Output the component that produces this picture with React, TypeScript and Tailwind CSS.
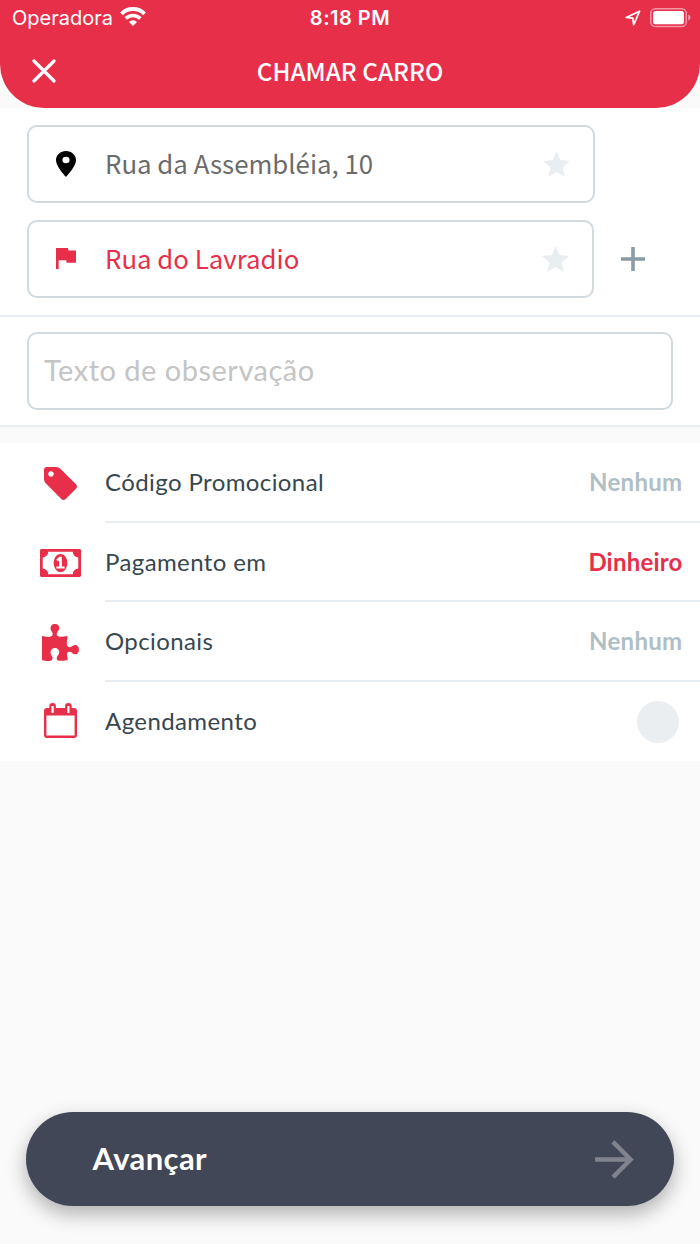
import React, { useState } from 'react';

const WifiIcon = () => (
  <svg width="26" height="19" viewBox="0 0 26 19" fill="none" stroke="white">
    <path d="M1.500 6.800a16.200 16.200 0 0 1 23 0" strokeWidth="4" />
    <path d="M5.700 11.600a10.300 10.300 0 0 1 14.600 0" strokeWidth="3.600" />
    <path d="M13 19l-4-4a5.600 5.600 0 0 1 8 0z" fill="white" stroke="none" />
  </svg>
);

const LocationIcon = () => (
  <svg width="16" height="16" viewBox="0 0 16 16" fill="none">
    <path d="M14.600 1.200L1.200 7.400l6.600.8.9 6.500z" stroke="white" strokeWidth="1.700" strokeLinejoin="round" />
  </svg>
);

const BatteryIcon = () => (
  <svg width="41" height="20" viewBox="0 0 41 20" fill="none">
    <rect x=".75" y=".75" width="35.5" height="17.8" rx="4.5" stroke="white" strokeOpacity=".5" strokeWidth="1.5" />
    <rect x="3" y="3" width="31" height="13.3" rx="2.5" fill="white" />
    <path d="M38.2 6.6c3 1.2 3 4.8 0 6z" fill="white" fillOpacity=".5" />
  </svg>
);

const CloseIcon = () => (
  <svg width="24" height="24" viewBox="0 0 24 24" fill="none">
    <path d="M2 2l20 20M22 2L2 22" stroke="white" strokeWidth="3.2" strokeLinecap="round" />
  </svg>
);

const PinIcon = () => (
  <svg width="20" height="26" viewBox="5 2 14 20" preserveAspectRatio="none">
    <path d="M12 2C8.13 2 5 5.13 5 9c0 5.25 7 13 7 13s7-7.75 7-13c0-3.87-3.13-7-7-7zm0 9.5a2.5 2.5 0 0 1 0-5 2.5 2.5 0 0 1 0 5z" />
  </svg>
);

const FlagIcon = () => (
  <svg width="20" height="21" viewBox="5 4 15 17" preserveAspectRatio="none" fill="#e72f4a">
    <path d="M14.4 6L14 4H5v17h2v-7h5.6l.4 2h7V6z" />
  </svg>
);

const StarIcon = () => (
  <svg width="27" height="26" viewBox="2 2 20 19" preserveAspectRatio="none" fill="#e9eef1">
    <path d="M12 17.27L18.18 21l-1.64-7.03L22 9.24l-7.19-.61L12 2 9.19 8.63 2 9.24l5.46 4.73L5.82 21z" />
  </svg>
);

const PlusIcon = () => (
  <svg width="24" height="24" viewBox="0 0 24 24" fill="none">
    <path d="M12 0v24M0 12h24" stroke="#8a9ba5" strokeWidth="3.6" />
  </svg>
);

const ArrowIcon = () => (
  <svg width="40" height="40" viewBox="0 0 40 40" fill="none">
    <path d="M1 20.5h34M19 2.9l17.600 17.600L19 38.100" stroke="#80838e" strokeWidth="4.4" />
  </svg>
);

const TagIcon = () => (
  <svg width="33" height="33" viewBox="0 128 1515 1515" fill="#e72f4a">
    <path d="M448 448q0-53-37.500-90.500T320 320t-90.500 37.500T192 448t37.500 90.500T320 576t90.500-37.500T448 448zm1067 576q0 53-37 90l-491 492q-39 37-91 37-53 0-90-37L91 890q-38-37-64.500-101T0 672V256q0-52 38-90t90-38h416q53 0 117 26.500T763 219l715 714q37 39 37 91z" />
  </svg>
);

const MoneyIcon = () => (
  <svg width="41" height="28" viewBox="0 256 1920 1280" preserveAspectRatio="none" fill="#e72f4a" fillRule="evenodd">
    <path d="M768 1152h384v-96h-128V608H910L762 745l77 80q42-37 55-57h2v288H768v96zm512-256q0 70-21 142t-59.500 134-101.500 101-138 39-138-39-101.500-101-59.500-134-21-142 21-142 59.500-134 101.500-101 138-39 138 39 101.500 101 59.500 134 21 142zm512 256V640q-106 0-181-75t-75-181H384q0 106-75 181t-181 75v512q106 0 181 75t75 181h1152q0-106 75-181t181-75zm128-832v1152q0 26-19 45t-45 19H64q-26 0-45-19t-19-45V320q0-26 19-45t45-19h1792q26 0 45 19t19 45z" />
  </svg>
);

const PuzzleIcon = () => (
  <svg width="37" height="37" viewBox="91 -14 1664 1571" preserveAspectRatio="none" fill="#e72f4a">
    <path d="M1755 1083q0 81-44.500 135t-123.500 54q-41 0-77.500-17.500t-59-38-56.500-38-71-17.500q-110 0-110 124 0 39 16 115t15 115v5q-22 0-33 1-34 3-97.500 11.500t-115.500 13.500-98 5q-61 0-103-26.500t-42-83.500q0-37 17.500-71t38-56.500 38-59 17.500-77.500q0-79-54-123.500t-135-44.500q-84 0-143 45.500t-59 127.500q0 43 15 83t33.500 64.500 33.500 53 15 50.500q0 45-46 89-37 35-117 35-95 0-245-24-9-2-27.500-4t-27.500-4l-13-2q-1 0-3-1-2 0-2-1v-1024q2 1 17.500 3.500t34 5 21.500 3.500q150 24 245 24 80 0 117-35 46-44 46-89 0-22-15-50.500t-33.500-53-33.500-64.500-15-83q0-82 59-127.500t144-45.500q80 0 134 44.500t54 123.500q0 41-17.500 77.500t-38 59-38 56.500-17.500 71q0 57 42 83.500t103 26.500q64 0 180-15t163-17v2q-1 2-3.500 17.500t-5 34-3.500 21.500q-24 150-24 245 0 80 35 117 44 46 89 46 22 0 50.500-15t53-33.500 64.500-33.500 83-15q82 0 127.500 59t45.500 143z" />
  </svg>
);

const CalendarIcon = () => (
  <svg width="33" height="35" viewBox="0 0 33 35" fill="none">
    <path
      d="M3 5h2.300V3.300a3.300 3.300 0 0 1 6.600 0V5h9.200V3.300a3.300 3.300 0 0 1 6.600 0V5H30a3 3 0 0 1 3 3v24a3 3 0 0 1-3 3H3a3 3 0 0 1-3-3V8a3 3 0 0 1 3-3z"
      fill="#e72f4a"
    />
    <path d="M2.400 12.500h28.200v20H2.400z" fill="white" />
    <path d="M7.500 3h2.200v7H7.500zM23.300 3h2.200v7h-2.200z" fill="white" />
  </svg>
);

interface AddressFieldProps {
  icon: React.ReactNode;
  label: string;
  className: string;
}

const AddressField: React.FC<AddressFieldProps> = ({ icon, label, className }) => (
  <div className={`flex h-[78px] items-center rounded-[10px] border-2 border-[#d1dade] pb-px pl-[27px] pr-[23.5px] font-['Noto_Sans_CJK_SC',sans-serif] text-[25.8px] ${className}`}>
    <span className="flex w-[49px]">{icon}</span>
    <span className="flex-1 whitespace-nowrap pb-px leading-none">{label}</span>
    <StarIcon />
  </div>
);

interface OptionRowProps {
  icon: React.ReactNode;
  label: string;
  last?: boolean;
  children: React.ReactNode;
}

const OptionRow: React.FC<OptionRowProps> = ({ icon, label, last, children }) => (
  <div className="flex h-[79.5px]">
    <div className={`flex w-[105px] items-center justify-center pl-4 ${last ? 'pb-px' : 'pt-px'}`}>{icon}</div>
    <div className={`flex flex-1 items-center justify-between pr-[17.5px] ${last ? '' : 'border-b-2 border-[#e8edf1] pt-px'}`}>
      <span className="text-[24px] tracking-[0.4px] text-[#37474f]">{label}</span>
      {children}
    </div>
  </div>
);

export default function App() {
  const [scheduled, setScheduled] = useState(false);

  return (
    <div className="flex h-[1244px] w-[700px] flex-col bg-[#fafafa] font-['Lato',sans-serif]">
      <header className="h-[108px] rounded-b-[44px] bg-[#e72f4a] text-white">
        {/* Status bar */}
        <div className="grid h-9 grid-cols-[1fr_auto_1fr] items-center pl-3 pr-[9px] font-['Inter',sans-serif] text-[20px]">
          <div className="flex items-center gap-[7px]">
            <span>Operadora</span>
            <span className="pb-1">
              <WifiIcon />
            </span>
          </div>
          <span className="pr-[3px] text-center font-semibold tracking-[0.5px]">8:18 PM</span>
          <div className="flex items-center justify-end gap-[9px] pb-px">
            <LocationIcon />
            <BatteryIcon />
          </div>
        </div>
        <div className="grid h-[70px] grid-cols-3 items-center px-8">
          <button className="w-6" aria-label="Fechar">
            <CloseIcon />
          </button>
          <h1 className="whitespace-nowrap text-center font-['Noto_Sans_CJK_SC',sans-serif] text-[24.3px] font-medium leading-none">
            CHAMAR CARRO
          </h1>
        </div>
      </header>

      {/* Addresses */}
      <section className="flex h-[209px] flex-col gap-[17px] border-b-2 border-[#e8edf1] bg-white pl-[27px] pt-[17px]">
        <AddressField icon={<PinIcon />} label="Rua da Assembléia, 10" className="w-[568px] text-[#6b6b6b]" />
        <div className="flex items-center gap-[27px]">
          <AddressField icon={<FlagIcon />} label="Rua do Lavradio" className="w-[567px] text-[#e72f4a]" />
          <button aria-label="Adicionar parada">
            <PlusIcon />
          </button>
        </div>
      </section>

      <section className="h-[110px] border-b-2 border-[#e8edf1] bg-white px-[27px] pt-[15px]">
        <input
          className="h-[78px] w-full rounded-[10px] border-2 border-[#d1dade] px-[15px] pb-1 text-[29px] tracking-[0.5px] placeholder:text-[#c4c4c4]"
          placeholder="Texto de observação"
        />
      </section>

      {/* Ride options */}
      <section className="mt-4 h-[318px] bg-white">
        <OptionRow icon={<TagIcon />} label="Código Promocional">
          <span className="text-[24px] font-bold tracking-[0.3px] text-[#b0bec5]">Nenhum</span>
        </OptionRow>
        <OptionRow icon={<MoneyIcon />} label="Pagamento em">
          <span className="text-[24px] font-bold tracking-[0.2px] text-[#e72f4a]">Dinheiro</span>
        </OptionRow>
        <OptionRow icon={<PuzzleIcon />} label="Opcionais">
          <span className="text-[24px] font-bold tracking-[0.3px] text-[#b0bec5]">Nenhum</span>
        </OptionRow>
        <OptionRow icon={<CalendarIcon />} label="Agendamento" last>
          <button
            aria-label="Agendar"
            onClick={() => setScheduled(!scheduled)}
            className={`mr-1 mt-px size-[42px] rounded-full ${scheduled ? 'bg-[#e72f4a]' : 'bg-[#eaeef1]'}`}
          />
        </OptionRow>
      </section>

      <button className="mb-[38px] ml-[25.5px] mr-[26px] mt-auto flex h-[94px] items-center justify-between rounded-full bg-[#414757] pl-[67px] pr-[40px] text-[31px] font-bold tracking-[0.4px] text-white shadow-[0_8px_20px_rgba(0,0,0,0.3)]">
        <span className="pb-0.5">Avançar</span>
        <ArrowIcon />
      </button>
    </div>
  );
}
